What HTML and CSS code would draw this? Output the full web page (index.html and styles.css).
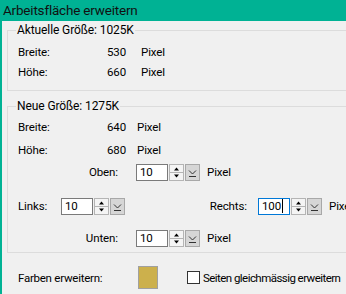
FILE: index.html
```html
<!DOCTYPE html>
<html lang="de">
<head>
  <meta charset="UTF-8">
  <title>Arbeitsfläche erweitern</title>
  <link rel="stylesheet" href="styles.css">
</head>
<body>
  <div class="window">
    <div class="titlebar">Arbeitsfläche erweitern</div>

    <fieldset class="group group-current">
      <legend>Aktuelle Größe: 1025K</legend>
      <div class="size-row"><span class="lbl">Breite:</span><span class="num">530</span><span class="unit">Pixel</span></div>
      <div class="size-row"><span class="lbl">Höhe:</span><span class="num">660</span><span class="unit">Pixel</span></div>
    </fieldset>

    <fieldset class="group group-new">
      <legend>Neue Größe: 1275K</legend>
      <div class="size-row"><span class="lbl">Breite:</span><span class="num">640</span><span class="unit">Pixel</span></div>
      <div class="size-row"><span class="lbl">Höhe:</span><span class="num">680</span><span class="unit">Pixel</span></div>

      <div class="spin-row row-top">
        <span class="spin-label wide">Oben:</span>
        <div class="spinner">
          <div class="spin-input">10</div>
          <svg class="spin-btns" width="15" height="17" viewBox="0 0 15 17">
            <rect x="0.5" y="0.5" width="14" height="16" fill="#f4f4f4" stroke="#b4b4b4"/>
            <line x1="1" y1="8.5" x2="14" y2="8.5" stroke="#b4b4b4"/>
            <path d="M7.5 3.5 L10 6.5 L5 6.5 Z" fill="#000"/>
            <path d="M5 10.5 L10 10.5 L7.5 13.5 Z" fill="#000"/>
          </svg>
          <svg class="drop-btn" width="15" height="17" viewBox="0 0 15 17">
            <rect x="0.5" y="0.5" width="14" height="16" fill="#d6d6d6" stroke="#a8a8a8"/>
            <polyline points="4,6.5 7.5,10 11,6.5" fill="none" stroke="#333"/>
            <line x1="4" y1="12.5" x2="11" y2="12.5" stroke="#333"/>
          </svg>
        </div>
        <span class="unit-after">Pixel</span>
      </div>

      <div class="spin-row row-mid">
        <span class="spin-label links">Links:</span>
        <div class="spinner">
          <div class="spin-input">10</div>
          <svg class="spin-btns" width="15" height="17" viewBox="0 0 15 17">
            <rect x="0.5" y="0.5" width="14" height="16" fill="#f4f4f4" stroke="#b4b4b4"/>
            <line x1="1" y1="8.5" x2="14" y2="8.5" stroke="#b4b4b4"/>
            <path d="M7.5 3.5 L10 6.5 L5 6.5 Z" fill="#000"/>
            <path d="M5 10.5 L10 10.5 L7.5 13.5 Z" fill="#000"/>
          </svg>
          <svg class="drop-btn" width="15" height="17" viewBox="0 0 15 17">
            <rect x="0.5" y="0.5" width="14" height="16" fill="#d6d6d6" stroke="#a8a8a8"/>
            <polyline points="4,6.5 7.5,10 11,6.5" fill="none" stroke="#333"/>
            <line x1="4" y1="12.5" x2="11" y2="12.5" stroke="#333"/>
          </svg>
        </div>
        <span class="spin-label rechts">Rechts:</span>
        <div class="spinner">
          <div class="spin-input focused"><span class="caret">100</span></div>
          <svg class="spin-btns" width="15" height="17" viewBox="0 0 15 17">
            <rect x="0.5" y="0.5" width="14" height="16" fill="#f4f4f4" stroke="#b4b4b4"/>
            <line x1="1" y1="8.5" x2="14" y2="8.5" stroke="#b4b4b4"/>
            <path d="M7.5 3.5 L10 6.5 L5 6.5 Z" fill="#000"/>
            <path d="M5 10.5 L10 10.5 L7.5 13.5 Z" fill="#000"/>
          </svg>
          <svg class="drop-btn" width="15" height="17" viewBox="0 0 15 17">
            <rect x="0.5" y="0.5" width="14" height="16" fill="#d6d6d6" stroke="#a8a8a8"/>
            <polyline points="4,6.5 7.5,10 11,6.5" fill="none" stroke="#333"/>
            <line x1="4" y1="12.5" x2="11" y2="12.5" stroke="#333"/>
          </svg>
        </div>
        <span class="unit-after">Pixel</span>
      </div>

      <div class="spin-row row-bottom">
        <span class="spin-label wide">Unten:</span>
        <div class="spinner">
          <div class="spin-input">10</div>
          <svg class="spin-btns" width="15" height="17" viewBox="0 0 15 17">
            <rect x="0.5" y="0.5" width="14" height="16" fill="#f4f4f4" stroke="#b4b4b4"/>
            <line x1="1" y1="8.5" x2="14" y2="8.5" stroke="#b4b4b4"/>
            <path d="M7.5 3.5 L10 6.5 L5 6.5 Z" fill="#000"/>
            <path d="M5 10.5 L10 10.5 L7.5 13.5 Z" fill="#000"/>
          </svg>
          <svg class="drop-btn" width="15" height="17" viewBox="0 0 15 17">
            <rect x="0.5" y="0.5" width="14" height="16" fill="#d6d6d6" stroke="#a8a8a8"/>
            <polyline points="4,6.5 7.5,10 11,6.5" fill="none" stroke="#333"/>
            <line x1="4" y1="12.5" x2="11" y2="12.5" stroke="#333"/>
          </svg>
        </div>
        <span class="unit-after">Pixel</span>
      </div>
    </fieldset>

    <div class="footer">
      <span class="footer-label">Farben erweitern:</span>
      <span class="swatch"></span>
      <span class="checkbox"></span>
      <span class="check-label">Seiten gleichmässig erweitern</span>
    </div>
  </div>
</body>
</html>
```

FILE: styles.css
```css
/* Reset */
* { box-sizing: border-box; margin: 0; padding: 0; }

html, body {
  width: 346px;
  height: 294px;
  overflow: hidden;
}

body {
  background: #f0f0f0;
  font-family: Roboto, "Open Sans", Arial, sans-serif;
  font-size: 11.5px;
  letter-spacing: -0.1px;
  color: #000;
}

/* Dialog frame */
.window {
  height: 294px;
  border-left: 2px solid #00b294;
  background: #f0f0f0;
}

.titlebar {
  height: 21px;
  margin-left: -2px;
  padding-left: 3px;
  font-size: 13.5px;
  letter-spacing: -0.2px;
  line-height: 20px;
  background: #00b294;
  color: #111;
}

/* Group boxes */
.group {
  width: 380px;
  margin: 1px 0 0 5px;
  padding: 0 0 8px 10px;
  border: 1px solid #dcdcdc;
}
.group legend {
  margin-left: -2px;
  padding: 0 1px;
  line-height: 16px;
  font-size: 12px;
}
.group-current {
  padding-top: 4px;
}
.group-new {
  margin-top: 7px;
  padding-top: 1px;
  padding-bottom: 3px;
}

/* Size rows */
.size-row {
  display: flex;
  align-items: center;
  height: 20px;
}
.group-new .size-row { height: 23px; }
.size-row .lbl { width: 70px; }
.size-row .num { width: 38px; text-align: right; }
.size-row .unit { margin-left: 15px; }
.group-new .size-row .unit { margin-left: 11px; }

/* Spinner rows */
.spin-row {
  display: flex;
  align-items: center;
  height: 22px;
}
.row-mid { margin-top: 12px; }
.row-bottom { margin-top: 10px; }

.spin-label { flex-shrink: 0; }
.spin-label.wide { width: 100px; text-align: right; margin-right: 18px; }
.spin-label.links { width: 43px; }
.spin-label.rechts { width: 122px; text-align: right; margin-right: 11px; }

.spinner {
  display: flex;
  flex-shrink: 0;
  gap: 1px;
  height: 17px;
}
.spin-input {
  width: 32px;
  height: 17px;
  padding-left: 3px;
  line-height: 15px;
  background: #fff;
  border: 1px solid #7a7a7a;
}
.spin-input.focused { border-color: #0078d7; }
.caret {
  padding-right: 1px;
  border-right: 1px solid #000;
}
.spin-btns, .drop-btn { display: block; }

.unit-after { margin-left: 7px; white-space: nowrap; }

/* Footer row */
.footer {
  display: flex;
  align-items: center;
  margin-top: 13px;
  padding-left: 16px;
}
.footer > span { flex-shrink: 0; }
.footer-label { width: 120px; letter-spacing: -0.25px; }
.swatch {
  width: 20px;
  height: 23px;
  background: #ccb04c;
  border: 1px solid #a0a0a0;
}
.checkbox {
  width: 13px;
  height: 13px;
  margin-left: 29px;
  background: #fff;
  border: 1px solid #333;
}
.check-label {
  margin-left: 3px;
  letter-spacing: -0.55px;
  white-space: nowrap;
}
```
